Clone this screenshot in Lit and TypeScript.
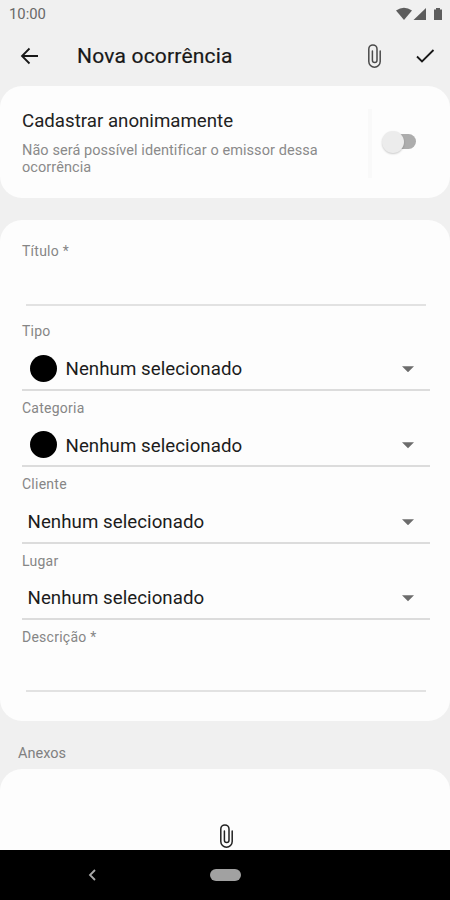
import { LitElement, html, css, nothing } from "lit";
import { customElement, property } from "lit/decorators.js";

@customElement("clip-icon")
class ClipIcon extends LitElement {
  static styles = css`
    :host { display: block; }
    svg { display: block; width: 100%; height: 100%; fill: none; stroke: currentColor; stroke-width: 1.5; stroke-linecap: round; }
  `;
  render() {
    return html`<svg viewBox="0 0 13 24">
      <path d="M12.200 7V17.500a5.700 5.700 0 0 1-11.400 0V5a4.100 4.100 0 0 1 8.200 0V16.300a2.300 2.300 0 0 1-4.600 0V7" />
    </svg>`;
  }
}

@customElement("select-field")
class SelectField extends LitElement {
  @property() label = "";
  @property({ type: Boolean }) dot = false;
  static styles = css`
    :host { display: block; box-sizing: border-box; height: 76.4px; }
    .label { height: 18px; line-height: 18px; font-size: 14px; letter-spacing: 0.25px; color: #868686; }
    .row { display: flex; align-items: center; height: 50.4px; padding: 9px 16px 0 5.5px; box-sizing: border-box; border-bottom: 2px solid #dcdcdc; }
    .dot { width: 27px; height: 27px; border-radius: 50%; background: #000; margin: -2px 9px 0 2px; }
    .value { flex: 1; font-size: 18.7px; line-height: 24px; letter-spacing: 0.05px; color: #1c1c1c; }
    .arrow { width: 12px; height: 6.5px; fill: #6c6c6c; }
  `;
  render() {
    return html`
      <div class="label">${this.label}</div>
      <div class="row">
        ${this.dot ? html`<span class="dot"></span>` : nothing}
        <span class="value">Nenhum selecionado</span>
        <svg class="arrow" viewBox="0 0 12 6"><path d="M0 0h12L6 6z" /></svg>
      </div>
    `;
  }
}

@customElement("app-root")
class AppRoot extends LitElement {
  static styles = css`
    :host { display: flex; flex-direction: column; width: 450px; height: 900px; overflow: hidden; background: #f0f0f0; font-family: Roboto, sans-serif; }
    * { box-sizing: border-box; }
    svg { display: block; }
    .status { flex: none; height: 28px; display: flex; align-items: center; justify-content: space-between; padding: 0 7px 0 9px; font-size: 14.8px; line-height: 29px; color: #686868; }
    .status svg { width: 48px; height: 16px; fill: #5d5d5d; }
    .bar { flex: none; height: 57.5px; display: flex; align-items: center; padding: 0 15px 2px 20px; color: #181818; }
    .back { width: 20px; height: 18px; }
    .stroke { fill: none; stroke: currentColor; stroke-width: 1.8; }
    .title { flex: 1; margin: 1px 0 0 37px; font-size: 21px; line-height: 28px; font-weight: 400; letter-spacing: 0.2px; -webkit-text-stroke: 0.2px; }
    .clip { width: 13px; height: 24px; color: #4a4a4a; margin-right: 34px; }
    .check { width: 20px; height: 16px; }
    .card { flex: none; background: #fdfdfd; border-radius: 22px; }
    .anon { height: 112px; display: flex; padding: 23px 0 20px 22px; }
    .copy { flex: 1; }
    .heading { height: 24px; font-size: 18.7px; line-height: 24px; color: #222; }
    .hint { margin-top: 9px; font-size: 14.5px; line-height: 17.5px; letter-spacing: 0.07px; color: #8a8a8a; }
    .side { width: 82px; border-left: 4px solid #f9f9f9; display: flex; align-items: center; padding: 0 0 3px 9px; }
    .track { position: relative; width: 31px; height: 15px; border-radius: 8px; background: #adadad; margin-left: 4px; }
    .thumb { position: absolute; left: -3.5px; top: -3.5px; width: 22px; height: 22px; border-radius: 50%; background: #ececec; box-shadow: 0 1px 2px #0003; }
    .form { margin-top: 22px; height: 501.5px; padding: 22.4px 20px 0 22px; }
    .text { height: 80.6px; }
    .text .input { height: 46.6px; }
    .label { height: 18px; line-height: 18px; font-size: 14px; letter-spacing: 0.25px; color: #868686; }
    .input { height: 46px; margin: 0 4px; border-bottom: 2px solid #e2e2e2; }
    .section { flex: none; height: 48px; padding: 24px 0 0 18px; font-size: 14.5px; line-height: 18px; color: #808080; }
    .files { height: 81px; border-radius: 22px 22px 0 0; display: flex; align-items: flex-end; justify-content: center; padding: 0 0 2px 2px; color: #222; }
    .files clip-icon { width: 13px; height: 24px; }
    .nav { flex: none; height: 50px; background: #000; display: flex; align-items: center; padding-left: 88px; color: #aaa; }
    .nav svg { width: 8px; height: 12px; }
    .pill { width: 31px; height: 12px; border-radius: 6px; background: #a1a1a1; margin-left: 114px; }
  `;
  render() {
    return html`
      <div class="status">
        <span>10:00</span>
        <svg viewBox="0 0 48 16">
          <path d="M1 4.500Q9 -1 17 4.500L9 14z" />
          <path d="M31 2v12H18.500z" />
          <path d="M39 3.500h2V2h4v1.500h2V14h-8z" />
        </svg>
      </div>
      <header class="bar">
        <svg class="back stroke" viewBox="0 0 20 18"><path d="M18 9H2M9.500 1.500L2 9l7.500 7.500" /></svg>
        <h1 class="title">Nova ocorrência</h1>
        <clip-icon class="clip"></clip-icon>
        <svg class="check stroke" viewBox="0 0 20 16"><path d="M2 8.500l5 5L18.500 2" /></svg>
      </header>
      <section class="card anon">
        <div class="copy">
          <div class="heading">Cadastrar anonimamente</div>
          <div class="hint">Não será possível identificar o emissor dessa<br />ocorrência</div>
        </div>
        <div class="side"><div class="track"><div class="thumb"></div></div></div>
      </section>
      <section class="card form">
        <div class="text"><div class="label">Título *</div><div class="input"></div></div>
        <select-field label="Tipo" dot></select-field>
        <select-field label="Categoria" dot></select-field>
        <select-field label="Cliente"></select-field>
        <select-field label="Lugar"></select-field>
        <div><div class="label">Descrição *</div><div class="input"></div></div>
      </section>
      <div class="section">Anexos</div>
      <section class="card files"><clip-icon></clip-icon></section>
      <nav class="nav">
        <svg class="stroke" viewBox="0 0 8 12"><path d="M7 1L2 6l5 5" /></svg>
        <div class="pill"></div>
      </nav>
    `;
  }
}
